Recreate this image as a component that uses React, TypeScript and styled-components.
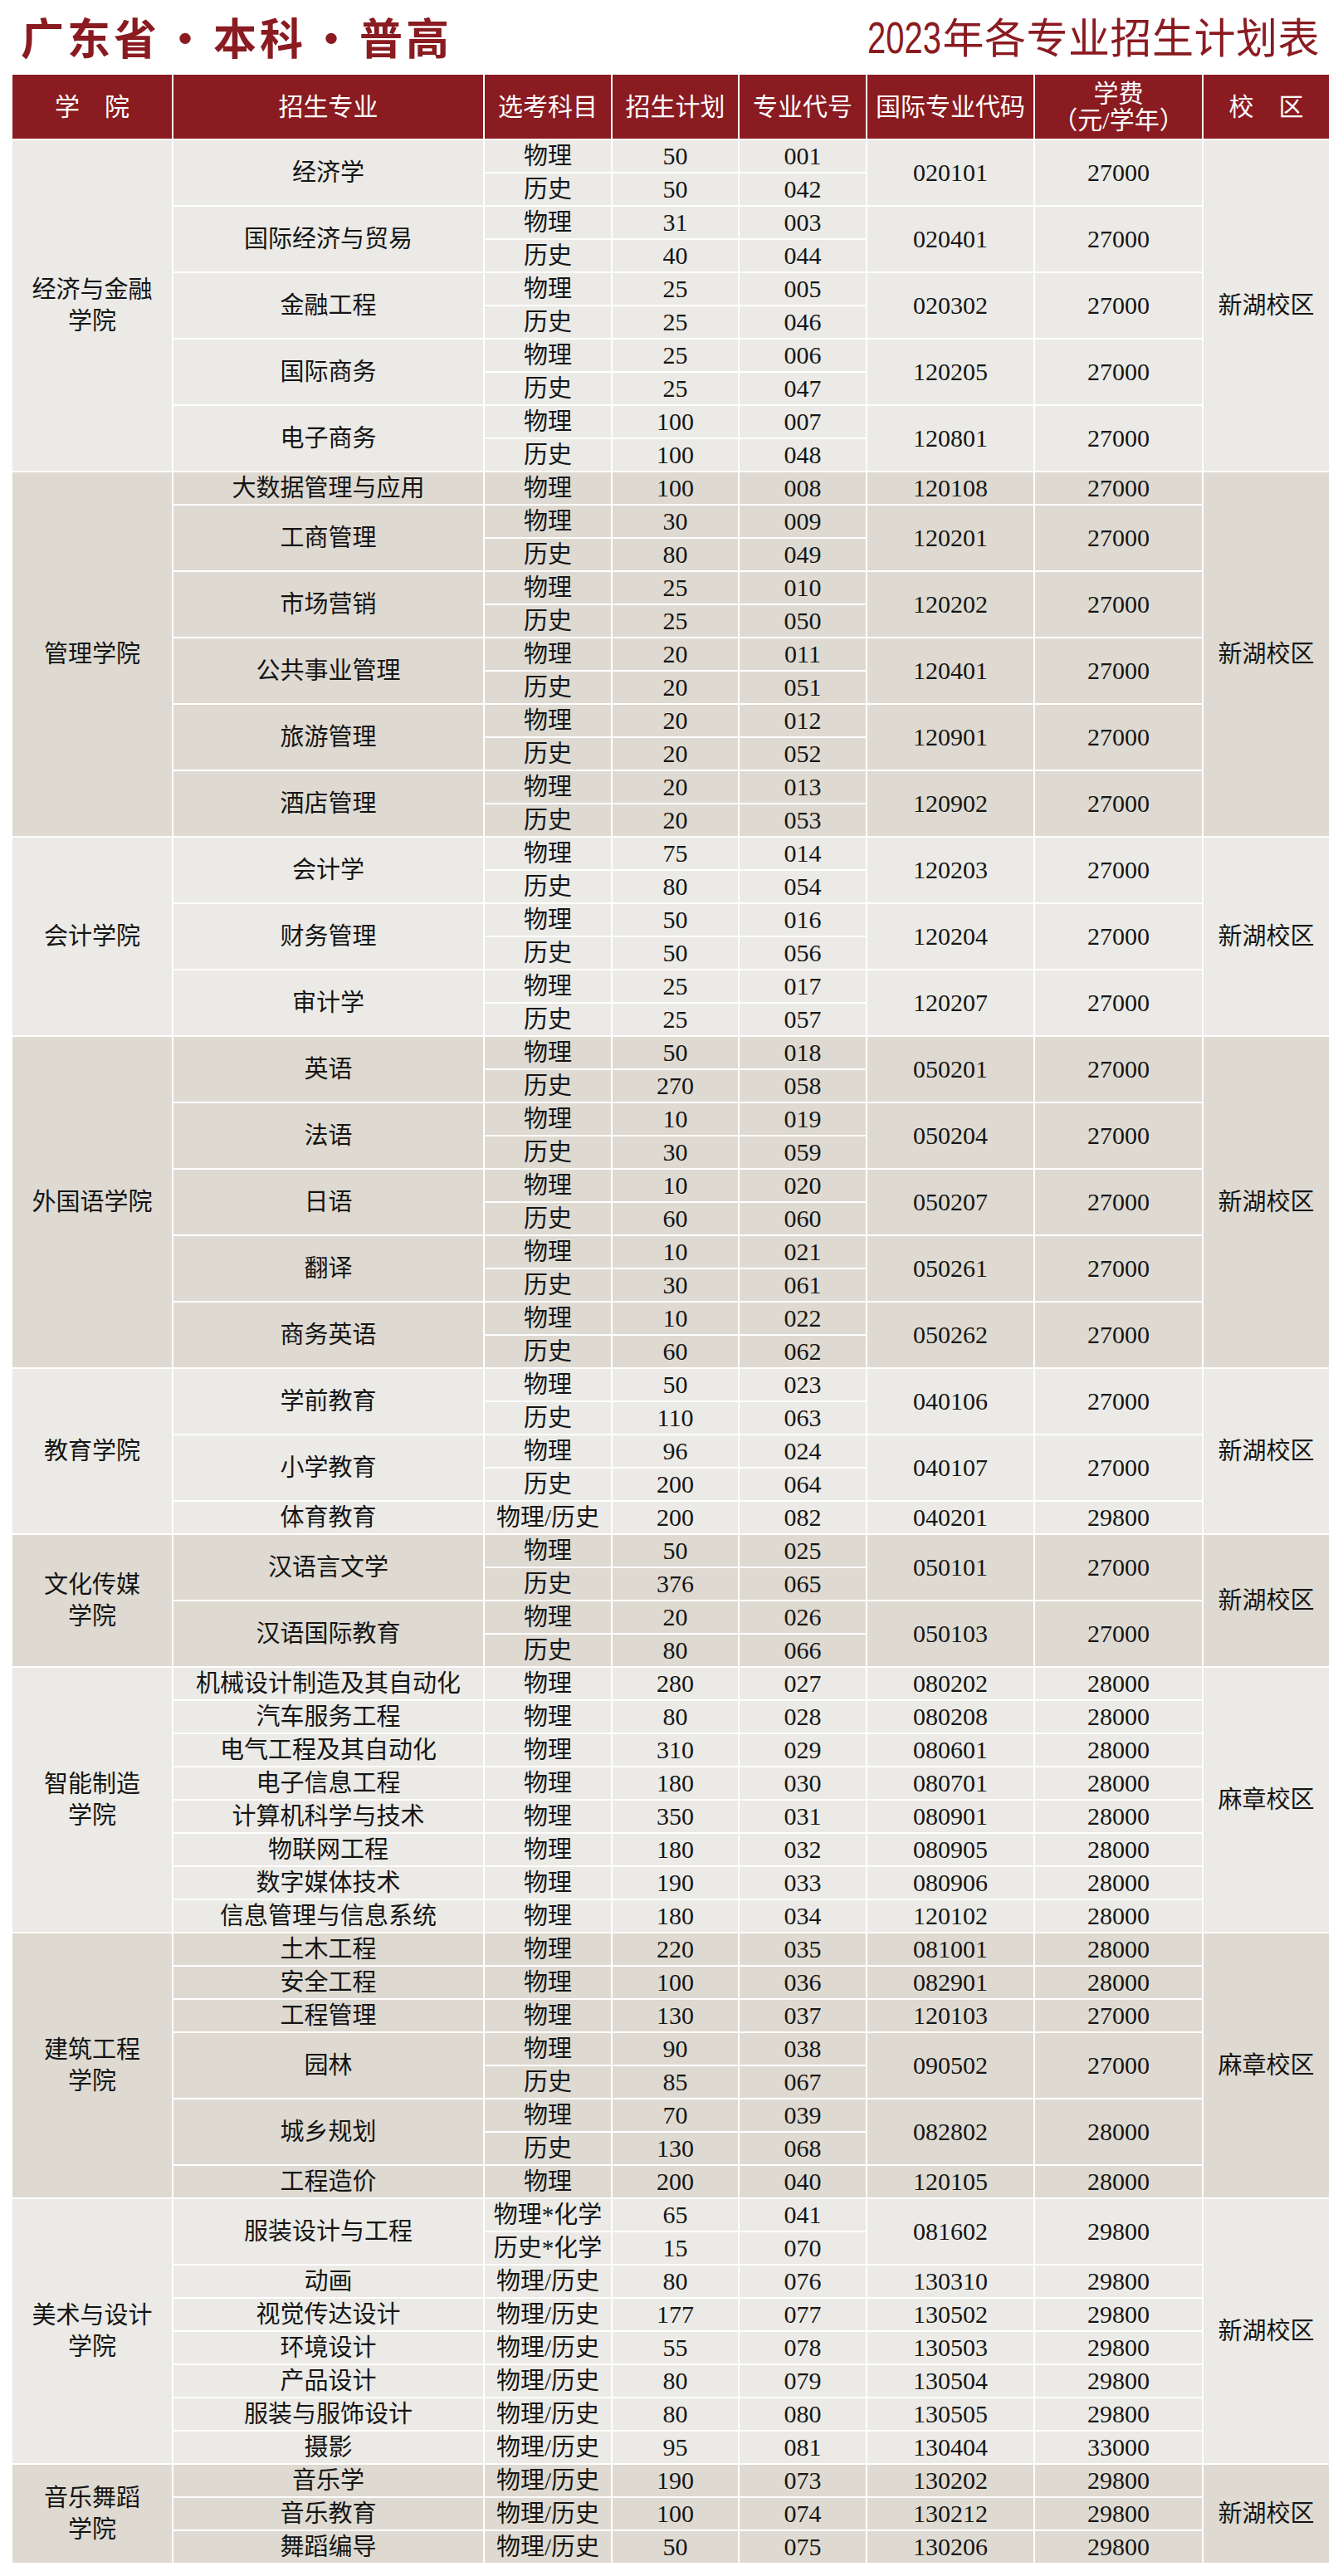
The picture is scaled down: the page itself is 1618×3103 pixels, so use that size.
import React, { FC } from 'react';
import styled, { createGlobalStyle } from 'styled-components';

const GlobalStyle = createGlobalStyle`
  body {
    margin: 0;
    background: #fff;
  }
`;

type Row = [string, string, string];

interface Major {
  name: string;
  rows: Row[];
  intl: string;
  fee: string;
}

interface College {
  name: string[];
  campus: string;
  majors: Major[];
}

const P = '物理';
const H = '历史';
const PH = '物理/历史';

const m = (name: string, rows: Row[], intl: string, fee: string): Major => ({ name, rows, intl, fee });

const colleges: College[] = [
  {
    name: ['经济与金融', '学院'],
    campus: '新湖校区',
    majors: [
      m('经济学', [[P, '50', '001'], [H, '50', '042']], '020101', '27000'),
      m('国际经济与贸易', [[P, '31', '003'], [H, '40', '044']], '020401', '27000'),
      m('金融工程', [[P, '25', '005'], [H, '25', '046']], '020302', '27000'),
      m('国际商务', [[P, '25', '006'], [H, '25', '047']], '120205', '27000'),
      m('电子商务', [[P, '100', '007'], [H, '100', '048']], '120801', '27000'),
    ],
  },
  {
    name: ['管理学院'],
    campus: '新湖校区',
    majors: [
      m('大数据管理与应用', [[P, '100', '008']], '120108', '27000'),
      m('工商管理', [[P, '30', '009'], [H, '80', '049']], '120201', '27000'),
      m('市场营销', [[P, '25', '010'], [H, '25', '050']], '120202', '27000'),
      m('公共事业管理', [[P, '20', '011'], [H, '20', '051']], '120401', '27000'),
      m('旅游管理', [[P, '20', '012'], [H, '20', '052']], '120901', '27000'),
      m('酒店管理', [[P, '20', '013'], [H, '20', '053']], '120902', '27000'),
    ],
  },
  {
    name: ['会计学院'],
    campus: '新湖校区',
    majors: [
      m('会计学', [[P, '75', '014'], [H, '80', '054']], '120203', '27000'),
      m('财务管理', [[P, '50', '016'], [H, '50', '056']], '120204', '27000'),
      m('审计学', [[P, '25', '017'], [H, '25', '057']], '120207', '27000'),
    ],
  },
  {
    name: ['外国语学院'],
    campus: '新湖校区',
    majors: [
      m('英语', [[P, '50', '018'], [H, '270', '058']], '050201', '27000'),
      m('法语', [[P, '10', '019'], [H, '30', '059']], '050204', '27000'),
      m('日语', [[P, '10', '020'], [H, '60', '060']], '050207', '27000'),
      m('翻译', [[P, '10', '021'], [H, '30', '061']], '050261', '27000'),
      m('商务英语', [[P, '10', '022'], [H, '60', '062']], '050262', '27000'),
    ],
  },
  {
    name: ['教育学院'],
    campus: '新湖校区',
    majors: [
      m('学前教育', [[P, '50', '023'], [H, '110', '063']], '040106', '27000'),
      m('小学教育', [[P, '96', '024'], [H, '200', '064']], '040107', '27000'),
      m('体育教育', [[PH, '200', '082']], '040201', '29800'),
    ],
  },
  {
    name: ['文化传媒', '学院'],
    campus: '新湖校区',
    majors: [
      m('汉语言文学', [[P, '50', '025'], [H, '376', '065']], '050101', '27000'),
      m('汉语国际教育', [[P, '20', '026'], [H, '80', '066']], '050103', '27000'),
    ],
  },
  {
    name: ['智能制造', '学院'],
    campus: '麻章校区',
    majors: [
      m('机械设计制造及其自动化', [[P, '280', '027']], '080202', '28000'),
      m('汽车服务工程', [[P, '80', '028']], '080208', '28000'),
      m('电气工程及其自动化', [[P, '310', '029']], '080601', '28000'),
      m('电子信息工程', [[P, '180', '030']], '080701', '28000'),
      m('计算机科学与技术', [[P, '350', '031']], '080901', '28000'),
      m('物联网工程', [[P, '180', '032']], '080905', '28000'),
      m('数字媒体技术', [[P, '190', '033']], '080906', '28000'),
      m('信息管理与信息系统', [[P, '180', '034']], '120102', '28000'),
    ],
  },
  {
    name: ['建筑工程', '学院'],
    campus: '麻章校区',
    majors: [
      m('土木工程', [[P, '220', '035']], '081001', '28000'),
      m('安全工程', [[P, '100', '036']], '082901', '28000'),
      m('工程管理', [[P, '130', '037']], '120103', '27000'),
      m('园林', [[P, '90', '038'], [H, '85', '067']], '090502', '27000'),
      m('城乡规划', [[P, '70', '039'], [H, '130', '068']], '082802', '28000'),
      m('工程造价', [[P, '200', '040']], '120105', '28000'),
    ],
  },
  {
    name: ['美术与设计', '学院'],
    campus: '新湖校区',
    majors: [
      m('服装设计与工程', [['物理*化学', '65', '041'], ['历史*化学', '15', '070']], '081602', '29800'),
      m('动画', [[PH, '80', '076']], '130310', '29800'),
      m('视觉传达设计', [[PH, '177', '077']], '130502', '29800'),
      m('环境设计', [[PH, '55', '078']], '130503', '29800'),
      m('产品设计', [[PH, '80', '079']], '130504', '29800'),
      m('服装与服饰设计', [[PH, '80', '080']], '130505', '29800'),
      m('摄影', [[PH, '95', '081']], '130404', '33000'),
    ],
  },
  {
    name: ['音乐舞蹈', '学院'],
    campus: '新湖校区',
    majors: [
      m('音乐学', [[PH, '190', '073']], '130202', '29800'),
      m('音乐教育', [[PH, '100', '074']], '130212', '29800'),
      m('舞蹈编导', [[PH, '50', '075']], '130206', '29800'),
    ],
  },
];

const RED = '#8a1b21';

const Page = styled.div`
  width: 1618px;
  padding-bottom: 14px;
  background: #fff;
`;

const TitleBar = styled.header`
  align-items: center;
  box-sizing: border-box;
  display: flex;
  height: 88px;
  justify-content: space-between;
  padding: 0 28px 0 25px;
`;

const MainTitle = styled.h1`
  color: ${RED};
  font-family: 'Noto Sans CJK SC', sans-serif;
  font-size: 52px;
  font-weight: 700;
  letter-spacing: 4px;
  line-height: 1;
  margin: 0;
`;

const Dot = styled.span`
  margin: 0 4px;
`;

const SubTitle = styled.h2`
  color: ${RED};
  font-family: 'Noto Sans CJK SC', sans-serif;
  font-size: 50px;
  font-weight: 400;
  letter-spacing: 0.5px;
  line-height: 1;
  margin: 0;
`;

const Year = styled.span`
  display: inline-block;
  font-family: 'Liberation Sans', sans-serif;
  font-size: 54px;
  letter-spacing: 0;
  margin-right: -30px;
  transform: scaleX(0.74);
  transform-origin: left center;
`;

const Sheet = styled.table`
  border-collapse: separate;
  border-spacing: 2px;
  margin-left: 13px;
  table-layout: fixed;
  width: 1590px;
`;

const HeadCell = styled.th`
  background: ${RED};
  color: #fff;
  font-family: 'Liberation Serif', 'Noto Sans CJK SC', serif;
  font-size: 30px;
  font-weight: 400;
  height: 77px;
  line-height: 32px;
  padding: 0;
  text-align: center;
  vertical-align: middle;
`;

const Cell = styled.td<{ $dark: boolean; $num?: boolean }>`
  background: ${({ $dark }) => ($dark ? '#dedad1' : '#ebeae6')};
  color: #151515;
  font-family: 'Liberation Serif', 'Noto Sans CJK SC', serif;
  font-size: ${({ $num }) => ($num ? '30px' : '29px')};
  height: 38px;
  line-height: 38px;
  padding: 0;
  text-align: center;
  vertical-align: middle;
  white-space: nowrap;
`;

const widths = [192, 373, 152, 151, 152, 200, 201, 151];

const App: FC = () => {
  const rows: React.ReactNode[] = [];

  colleges.forEach((college, ci) => {
    const dark = ci % 2 === 1;
    const span = college.majors.reduce((n, mj) => n + mj.rows.length, 0);

    college.majors.forEach((major, mi) => {
      major.rows.forEach(([subject, plan, code], ri) => {
        const first = mi === 0 && ri === 0;
        rows.push(
          <tr key={`${ci}-${mi}-${ri}`}>
            {first && (
              <Cell $dark={dark} rowSpan={span}>
                {college.name.map((line) => (
                  <div key={line}>{line}</div>
                ))}
              </Cell>
            )}
            {ri === 0 && (
              <Cell $dark={dark} rowSpan={major.rows.length}>
                {major.name}
              </Cell>
            )}
            <Cell $dark={dark}>{subject}</Cell>
            <Cell $dark={dark} $num>{plan}</Cell>
            <Cell $dark={dark} $num>{code}</Cell>
            {ri === 0 && (
              <Cell $dark={dark} $num rowSpan={major.rows.length}>
                {major.intl}
              </Cell>
            )}
            {ri === 0 && (
              <Cell $dark={dark} $num rowSpan={major.rows.length}>
                {major.fee}
              </Cell>
            )}
            {first && (
              <Cell $dark={dark} rowSpan={span}>
                {college.campus}
              </Cell>
            )}
          </tr>
        );
      });
    });
  });

  return (
    <Page>
      <GlobalStyle />
      <TitleBar>
        <MainTitle>
          广东省<Dot>·</Dot>本科<Dot>·</Dot>普高
        </MainTitle>
        <SubTitle>
          <Year>2023</Year>年各专业招生计划表
        </SubTitle>
      </TitleBar>

      <Sheet>
        <colgroup>
          {widths.map((w, i) => (
            <col key={i} style={{ width: w }} />
          ))}
        </colgroup>
        <thead>
          <tr>
            <HeadCell>学　院</HeadCell>
            <HeadCell>招生专业</HeadCell>
            <HeadCell>选考科目</HeadCell>
            <HeadCell>招生计划</HeadCell>
            <HeadCell>专业代号</HeadCell>
            <HeadCell>国际专业代码</HeadCell>
            <HeadCell>
              学费
              <br />
              （元/学年）
            </HeadCell>
            <HeadCell>校　区</HeadCell>
          </tr>
        </thead>
        <tbody>{rows}</tbody>
      </Sheet>
    </Page>
  );
};

export default App;
